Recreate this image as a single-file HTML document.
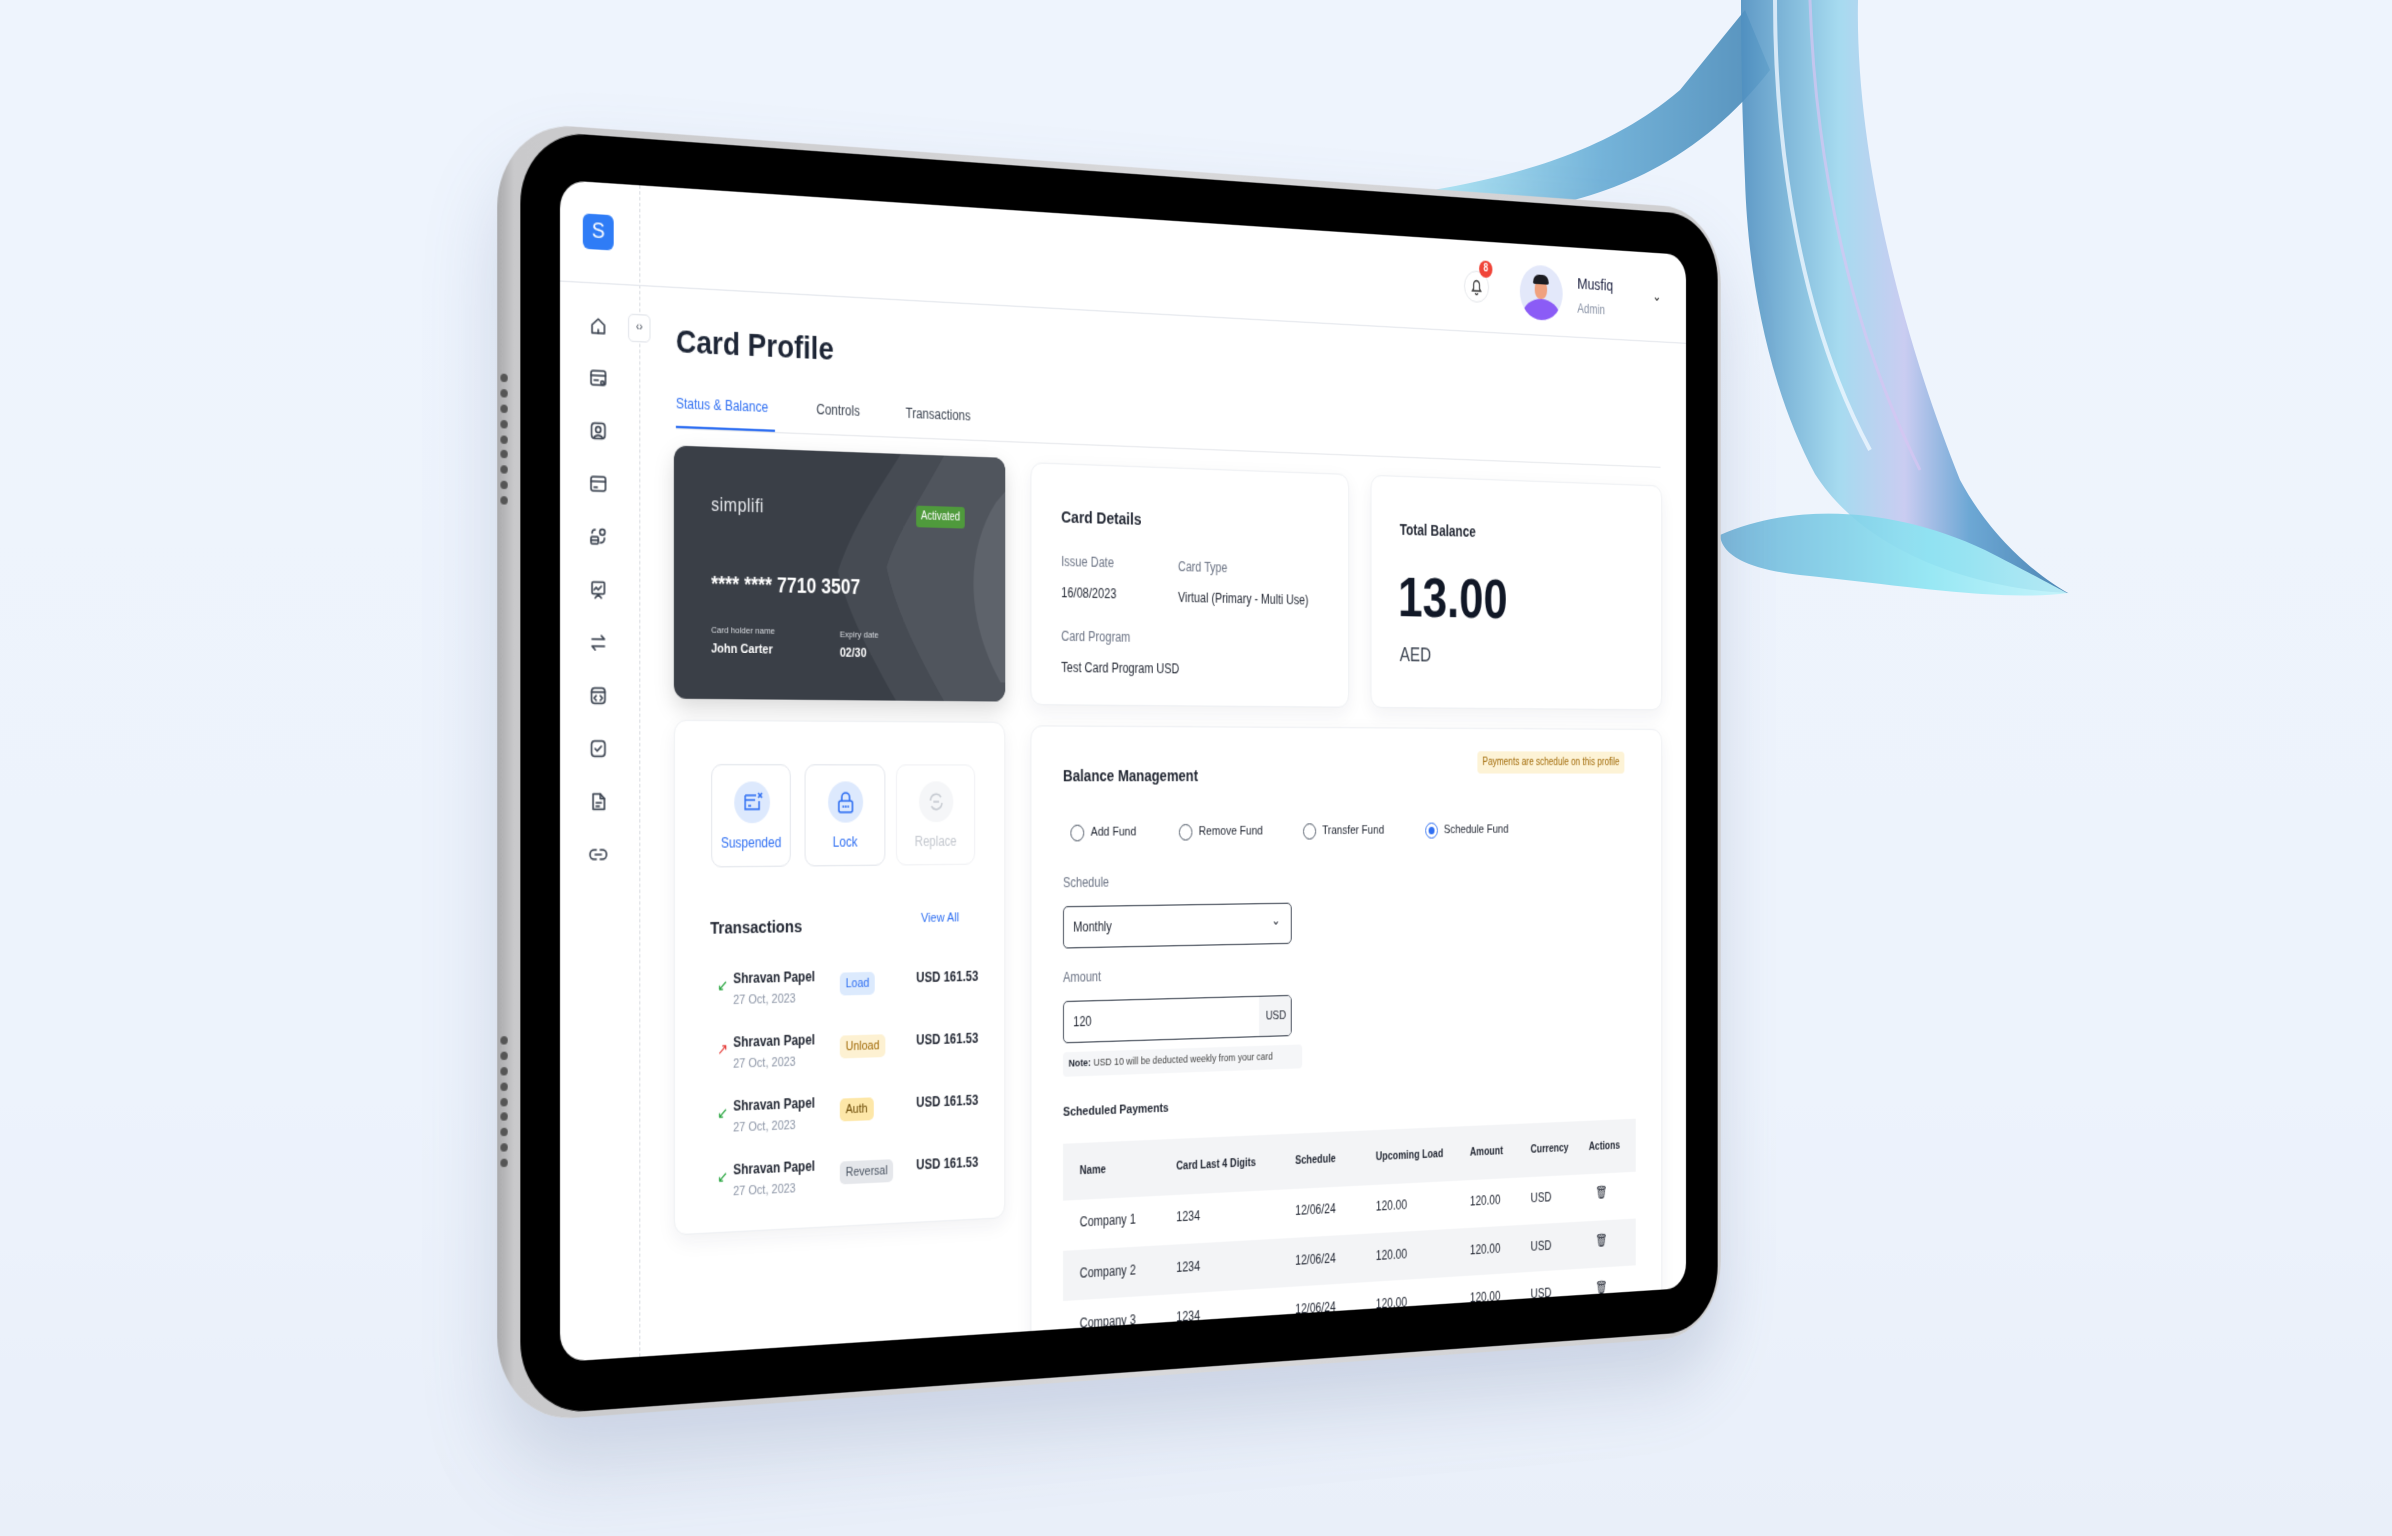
<!DOCTYPE html>
<html><head><meta charset="utf-8">
<style>
*{box-sizing:border-box;margin:0;padding:0}
html,body{width:2392px;height:1536px;overflow:hidden}
body{background:linear-gradient(180deg,#eef4fd 0%,#edf3fc 70%,#e9eff9 100%);font-family:"Liberation Sans",sans-serif;position:relative;color:#1f2430}
#rib{position:absolute;left:0;top:0}
#dev{position:absolute;left:0;top:0;width:1240px;height:1000px;transform-origin:0 0;transform:matrix3d(1.104185,0.090145,0,0.00011632,0,1.182,0,0,0,0,1,0,560,180,0,1)}
.outer{position:absolute;left:-60px;top:-46px;width:1344px;height:1094px;border-radius:72px;background:linear-gradient(90deg,#a9a9ab 0%,#c9c9cb 1.2%,#d8d8da 50%,#cfcfd1 100%);box-shadow:0 40px 70px rgba(90,110,150,.22)}
.black{position:absolute;left:-38px;top:-40px;width:1318px;height:1083px;border-radius:62px;background:#000}
.grill{position:absolute;left:-57px;width:8px;display:flex;flex-direction:column;justify-content:space-between}
.grill i{display:block;width:7px;height:7px;border-radius:50%;background:#555}
.scr{position:absolute;left:0;top:0;width:1240px;height:1000px;border-radius:24px;background:#fff;overflow:hidden}
.a{position:absolute}
.hline{position:absolute;left:0;top:85px;width:1240px;height:1px;background:#e3e6ec}
.dash{position:absolute;left:77px;top:0;height:1000px;border-left:1px dashed #d8dbe0}
.logo{position:absolute;left:22px;top:27px;width:30px;height:30px;border-radius:6px;background:#2f7cf6;color:#fff;font-size:19px;text-align:center;line-height:30px}
.sic{position:absolute;left:28px;width:18px;height:18px}
.sic svg{width:18px;height:18px;fill:none;stroke:#3b4350;stroke-width:1.6;stroke-linecap:round;stroke-linejoin:round}
.box{position:absolute;background:#fff;border:1px solid #eef0f3;border-radius:12px;box-shadow:0 6px 18px rgba(30,40,70,.06)}
.t{position:absolute;white-space:nowrap}
.lbl{font-size:12px;color:#6b7384}
.val{font-size:12px;color:#1f2430}
.h{font-weight:bold;color:#1f2430}
.radio{position:absolute;width:15px;height:15px;border:1.6px solid #4b5563;border-radius:50%}
.badge{position:absolute;font-size:11px;padding:4px 6px;border-radius:5px}
.row{position:absolute;left:0;width:664px;height:45px}
.td{position:absolute;font-size:12px;white-space:nowrap}
</style></head><body>

<svg id="rib" width="2392" height="1536" viewBox="0 0 2392 1536">
<defs>
<linearGradient id="g1" x1="0" y1="0" x2="1" y2="0">
<stop offset="0" stop-color="#4f8fc0"/><stop offset=".3" stop-color="#9ed8ee"/><stop offset=".5" stop-color="#c6c8f0"/><stop offset=".7" stop-color="#5e9fd0"/><stop offset="1" stop-color="#3a78aa"/></linearGradient>
<linearGradient id="g2" x1="0" y1="0" x2="1" y2="0">
<stop offset="0" stop-color="#a8e6f5"/><stop offset=".5" stop-color="#5fa8d3"/><stop offset="1" stop-color="#3b7fb0"/></linearGradient>
<linearGradient id="g3" x1="0" y1="0" x2="1" y2="0">
<stop offset="0" stop-color="#6fb2d8"/><stop offset=".6" stop-color="#8ee6f3"/><stop offset="1" stop-color="#c2f4fb"/></linearGradient>
</defs>
<path d="M1433,190 C1520,175 1610,150 1680,90 L1745,10 L1770,70 C1700,160 1610,200 1510,212 C1465,216 1436,206 1433,190Z" fill="url(#g2)" opacity=".85"/>
<path d="M1741,0 L1858,0 C1855,150 1900,330 1960,480 C1995,545 2045,580 2068,593 C1990,590 1870,560 1815,474 C1770,390 1748,280 1745,180 C1742,110 1741,50 1741,0Z" fill="url(#g1)" opacity=".9"/>
<path d="M1775,0 C1775,150 1800,320 1870,450" stroke="#eef6ff" stroke-width="4" fill="none" opacity=".8"/>
<path d="M1810,0 C1815,160 1850,330 1920,470" stroke="#d7c4f2" stroke-width="3" fill="none" opacity=".7"/>
<path d="M1720,535 C1800,500 1900,510 1985,550 C2040,578 2075,598 2068,593 C2000,602 1900,585 1800,575 C1755,570 1722,558 1720,535Z" fill="url(#g3)" opacity=".9"/>
</svg>

<div id="dev">
 <div class="outer"></div>
 <div class="black"></div>
 <div class="grill" style="top:166px;height:110px"><i></i><i></i><i></i><i></i><i></i><i></i><i></i><i></i><i></i></div>
 <div class="grill" style="top:723px;height:110px"><i></i><i></i><i></i><i></i><i></i><i></i><i></i><i></i><i></i></div>
 <div class="scr">
  <div class="dash"></div>
  <div class="hline"></div>
  <div class="logo">S</div>

  <div class="sic" style="top:113px"><svg viewBox="0 0 18 18"><path d="M3 8L9 3l6 5v7H3z"/><path d="M9 12v3"/></svg></div>
  <div class="sic" style="top:157px"><svg viewBox="0 0 18 18"><rect x="2" y="3" width="14" height="12" rx="2"/><path d="M2 7h14M5 11h4"/><circle cx="13" cy="13" r="1.5"/></svg></div>
  <div class="sic" style="top:202px"><svg viewBox="0 0 18 18"><rect x="2.5" y="2.5" width="13" height="13" rx="3"/><circle cx="9" cy="8" r="2.5"/><path d="M5 15c1-3 7-3 8 0"/></svg></div>
  <div class="sic" style="top:247px"><svg viewBox="0 0 18 18"><rect x="2" y="3" width="14" height="12" rx="2"/><path d="M2 7h14M5 12h3"/></svg></div>
  <div class="sic" style="top:292px"><svg viewBox="0 0 18 18"><circle cx="13" cy="5" r="2.5"/><rect x="2" y="9" width="7" height="6" rx="1"/><path d="M2 12h7M3 6c0-2 1-3 3-3M11 14c2 0 4-1 4-4"/></svg></div>
  <div class="sic" style="top:337px"><svg viewBox="0 0 18 18"><rect x="3" y="2.5" width="12" height="10" rx="1"/><path d="M5 9l2-2 2 2 3-3M6 16l3-3 3 3"/></svg></div>
  <div class="sic" style="top:382px"><svg viewBox="0 0 18 18"><path d="M3 6h12l-3-3M15 12H3l3 3"/></svg></div>
  <div class="sic" style="top:427px"><svg viewBox="0 0 18 18"><rect x="2.5" y="2.5" width="13" height="13" rx="3"/><path d="M2.5 6h13M7 9l-2 2 2 2M11 9l2 2-2 2"/></svg></div>
  <div class="sic" style="top:472px"><svg viewBox="0 0 18 18"><rect x="2.5" y="2.5" width="13" height="13" rx="3"/><path d="M6 9l2 2 4-4"/></svg></div>
  <div class="sic" style="top:517px"><svg viewBox="0 0 18 18"><path d="M4 2.5h7l4 4v9H4z"/><path d="M11 2.5v4h4M7 10h5M7 13h3"/></svg></div>
  <div class="sic" style="top:562px"><svg viewBox="0 0 18 18"><path d="M7 5H5a4 4 0 000 8h2M11 5h2a4 4 0 010 8h-2M6 9h6"/></svg></div>

  <div class="a" style="left:66px;top:110px;width:22px;height:24px;border:1px solid #e1e4ea;border-radius:5px;background:#fff;font-size:10px;text-align:center;line-height:22px;color:#3b4350">&#8249;&#8250;</div>

  <div class="a" style="left:968px;top:28px;width:30px;height:30px;border:1px solid #e4e6ea;border-radius:50%"><svg viewBox="0 0 30 30" width="30" height="30" style="position:absolute;left:-1px;top:-1px"><path d="M10 19h10l-1.5-2v-4a3.5 3.5 0 00-7 0v4z M13.5 21a1.5 1.5 0 003 0" fill="none" stroke="#333" stroke-width="1.3"/></svg></div>
  <div class="a" style="left:986px;top:18px;width:16px;height:16px;border-radius:50%;background:#f04438;color:#fff;font-size:10px;text-align:center;line-height:16px;font-weight:bold">8</div>
  <div class="a" style="left:1035px;top:19px;width:52px;height:52px;border-radius:50%;background:#e3e8fa;overflow:hidden">
   <div class="a" style="left:4px;top:32px;width:44px;height:30px;border-radius:50%;background:#8b5cf6"></div>
   <div class="a" style="left:18px;top:14px;width:15px;height:18px;border-radius:45%;background:#f0a17f"></div>
   <div class="a" style="left:16px;top:9px;width:19px;height:9px;border-radius:8px 8px 2px 2px;background:#1c1c22"></div>
  </div>
  <div class="t" style="left:1105px;top:26px;font-size:15px;color:#1d2140">Musfiq</div>
  <div class="t" style="left:1105px;top:51px;font-size:12px;color:#8a93a6">Admin</div>
  <div class="t" style="left:1198px;top:34px;font-size:13px;color:#222">&#8964;</div>

  <div class="t" style="left:113px;top:116px;font-size:28px;font-weight:bold;color:#1d2535">Card Profile</div>
  <div class="t" style="left:113px;top:178px;font-size:12px;color:#2f6ff2">Status &amp; Balance</div>
  <div class="t" style="left:254px;top:178px;font-size:12px;color:#3b4350">Controls</div>
  <div class="t" style="left:346px;top:178px;font-size:12px;color:#3b4350">Transactions</div>
  <div class="a" style="left:113px;top:206px;width:1095px;height:1px;background:#e6e8ec"></div>
  <div class="a" style="left:113px;top:204px;width:99px;height:2px;background:#2f6ff2"></div>

  <div class="a" style="left:111px;top:221px;width:340px;height:217px;border-radius:12px;background:#3a3f47;overflow:hidden;box-shadow:0 8px 20px rgba(0,0,0,.15)">
   <svg class="a" style="left:0;top:0" width="340" height="217" viewBox="0 0 340 217">
    <path d="M230 0 L275 0 C250 40 225 70 215 100 C225 140 250 180 275 217 L225 217 C200 180 175 140 165 105 C180 65 205 35 230 0Z" fill="#464b53"/>
    <path d="M275 0 L340 0 L340 217 L275 217 C250 180 225 140 215 100 C225 70 250 40 275 0Z" fill="#50555d"/>
    <path d="M330 40 C300 80 295 140 335 200 L340 200 L340 30Z" fill="#5e636b"/>
   </svg>
   <div class="t" style="left:37px;top:42px;font-size:16px;color:#e8eaee;letter-spacing:.5px">simplifi</div>
   <div class="t" style="left:246px;top:45px;padding:4px 5px;border-radius:3px;background:#4f9a3c;color:#fff;font-size:10px">Activated</div>
   <div class="t" style="left:37px;top:108px;font-size:18px;color:#fff;font-weight:bold">**** **** 7710 3507</div>
   <div class="t" style="left:37px;top:153px;font-size:8px;color:#d8dbe0">Card holder name</div>
   <div class="t" style="left:37px;top:168px;font-size:11px;color:#fff;font-weight:bold">John Carter</div>
   <div class="t" style="left:167px;top:155px;font-size:8px;color:#d8dbe0">Expiry date</div>
   <div class="t" style="left:167px;top:170px;font-size:11px;color:#fff;font-weight:bold">02/30</div>
  </div>

  <div class="box" style="left:478px;top:224px;width:355px;height:217px">
   <div class="t h" style="left:32px;top:39px;font-size:15px">Card Details</div>
   <div class="t lbl" style="left:32px;top:80px">Issue Date</div>
   <div class="t val" style="left:32px;top:108px">16/08/2023</div>
   <div class="t lbl" style="left:160px;top:82px">Card Type</div>
   <div class="t val" style="left:160px;top:110px">Virtual (Primary - Multi Use)</div>
   <div class="t lbl" style="left:32px;top:147px">Card Program</div>
   <div class="t val" style="left:32px;top:175px">Test Card Program USD</div>
  </div>

  <div class="box" style="left:858px;top:224px;width:352px;height:217px">
   <div class="t h" style="left:33px;top:41px;font-size:14px">Total Balance</div>
   <div class="t h" style="left:31px;top:83px;font-size:52px;color:#111827">13.00</div>
   <div class="t" style="left:33px;top:156px;font-size:18px;color:#3b4350">AED</div>
  </div>

  <div class="box" style="left:111px;top:456px;width:340px;height:442px">
   <div class="a" style="left:36px;top:37px;width:80px;height:89px;border:1px solid #e3e6ec;border-radius:10px">
    <div class="a" style="left:22px;top:14px;width:36px;height:36px;border-radius:50%;background:#dde9fd"><svg viewBox="0 0 36 36" width="36" height="36"><path d="M11 12h11M11 12v12h14v-7M11 16h10M14 21h3M24 10l4 4M28 10l-4 4" fill="none" stroke="#2f6ff2" stroke-width="1.5"/></svg></div>
    <div class="t" style="left:0;width:78px;text-align:center;top:60px;font-size:12px;color:#2f6ff2">Suspended</div>
   </div>
   <div class="a" style="left:130px;top:37px;width:83px;height:89px;border:1px solid #e3e6ec;border-radius:10px">
    <div class="a" style="left:23px;top:14px;width:36px;height:36px;border-radius:50%;background:#dde9fd"><svg viewBox="0 0 36 36" width="36" height="36"><rect x="11" y="17" width="14" height="10" rx="2" fill="none" stroke="#2f6ff2" stroke-width="1.6"/><path d="M14 17v-3a4 4 0 018 0v3" fill="none" stroke="#2f6ff2" stroke-width="1.6"/><circle cx="15.5" cy="22" r="1" fill="#2f6ff2"/><circle cx="18" cy="22" r="1" fill="#2f6ff2"/><circle cx="20.5" cy="22" r="1" fill="#2f6ff2"/></svg></div>
    <div class="t" style="left:0;width:81px;text-align:center;top:60px;font-size:12px;color:#2f6ff2">Lock</div>
   </div>
   <div class="a" style="left:224px;top:37px;width:83px;height:89px;border:1px solid #f0f1f4;border-radius:10px">
    <div class="a" style="left:23px;top:14px;width:36px;height:36px;border-radius:50%;background:#f5f6f8"><svg viewBox="0 0 36 36" width="36" height="36"><path d="M12 17a6 6 0 0111-3M24 19a6 6 0 01-11 3M15 18h6" fill="none" stroke="#c5c9d0" stroke-width="1.5"/></svg></div>
    <div class="t" style="left:0;width:81px;text-align:center;top:60px;font-size:12px;color:#c3c7ce">Replace</div>
   </div>
   <div class="t h" style="left:35px;top:170px;font-size:15px">Transactions</div>
   <div class="t" style="left:250px;top:167px;font-size:11.5px;color:#2f6ff2">View All</div>

   <div class="t" style="left:42px;top:220px;font-size:13px;color:#22a33a">&#8601;</div>
   <div class="t h" style="left:58px;top:215px;font-size:12px">Shravan Papel</div>
   <div class="t" style="left:58px;top:235px;font-size:11px;color:#8c95a6">27 Oct, 2023</div>
   <div class="badge" style="left:166px;top:219px;background:#dceafd;color:#2f6ff2">Load</div>
   <div class="t h" style="left:245px;top:218px;font-size:12px">USD 161.53</div>

   <div class="t" style="left:42px;top:275px;font-size:13px;color:#e53935">&#8599;</div>
   <div class="t h" style="left:58px;top:270px;font-size:12px">Shravan Papel</div>
   <div class="t" style="left:58px;top:290px;font-size:11px;color:#8c95a6">27 Oct, 2023</div>
   <div class="badge" style="left:166px;top:274px;background:#fdf1d2;color:#a16a07">Unload</div>
   <div class="t h" style="left:245px;top:273px;font-size:12px">USD 161.53</div>

   <div class="t" style="left:42px;top:330px;font-size:13px;color:#22a33a">&#8601;</div>
   <div class="t h" style="left:58px;top:325px;font-size:12px">Shravan Papel</div>
   <div class="t" style="left:58px;top:345px;font-size:11px;color:#8c95a6">27 Oct, 2023</div>
   <div class="badge" style="left:166px;top:329px;background:#fde7a8;color:#6b4a05">Auth</div>
   <div class="t h" style="left:245px;top:328px;font-size:12px">USD 161.53</div>

   <div class="t" style="left:42px;top:385px;font-size:13px;color:#22a33a">&#8601;</div>
   <div class="t h" style="left:58px;top:380px;font-size:12px">Shravan Papel</div>
   <div class="t" style="left:58px;top:400px;font-size:11px;color:#8c95a6">27 Oct, 2023</div>
   <div class="badge" style="left:166px;top:384px;background:#e5e7eb;color:#4b5563">Reversal</div>
   <div class="t h" style="left:245px;top:383px;font-size:12px">USD 161.53</div>
  </div>

  <div class="box" style="left:478px;top:459px;width:732px;height:600px">
   <div class="t h" style="left:34px;top:37px;font-size:14.5px">Balance Management</div>
   <div class="t" style="left:505px;top:21px;padding:5px 6px;background:#fdf3d6;border-radius:4px;font-size:10px;color:#a16a07">Payments are schedule on this profile</div>
   <div class="radio" style="left:42px;top:88px"></div><div class="t" style="left:64px;top:89px;font-size:11.5px">Add Fund</div>
   <div class="radio" style="left:161px;top:88px"></div><div class="t" style="left:183px;top:89px;font-size:11.5px">Remove Fund</div>
   <div class="radio" style="left:301px;top:88px"></div><div class="t" style="left:323px;top:89px;font-size:11.5px">Transfer Fund</div>
   <div class="radio" style="left:443px;top:88px;border-color:#2f6ff2"><div class="a" style="left:2.5px;top:2.5px;width:7px;height:7px;border-radius:50%;background:#2f6ff2"></div></div><div class="t" style="left:465px;top:89px;font-size:11.5px">Schedule Fund</div>
   <div class="t lbl" style="left:34px;top:133px">Schedule</div>
   <div class="a" style="left:34px;top:161px;width:254px;height:38px;border:1.3px solid #3b4350;border-radius:5px">
    <div class="t" style="left:10px;top:11px;font-size:12px">Monthly</div>
    <div class="t" style="left:230px;top:8px;font-size:12px">&#8964;</div>
   </div>
   <div class="t lbl" style="left:34px;top:218px">Amount</div>
   <div class="a" style="left:34px;top:246px;width:254px;height:38px;border:1.3px solid #3b4350;border-radius:5px;overflow:hidden">
    <div class="t" style="left:10px;top:11px;font-size:12px">120</div>
    <div class="a" style="left:216px;top:0;width:38px;height:38px;background:#f3f4f6;font-size:11px;text-align:center;line-height:36px">USD</div>
   </div>
   <div class="a" style="left:34px;top:292px;width:266px;height:22px;background:#f5f6f8;border-radius:4px;font-size:9.5px;line-height:22px;padding-left:6px;white-space:nowrap"><b>Note:</b> <span style="color:#444">USD 10 will be deducted weekly from your card</span></div>
   <div class="t h" style="left:34px;top:340px;font-size:11.5px">Scheduled Payments</div>
   <div class="a" style="left:34px;top:374px;width:664px;height:400px">
    <div class="row" style="top:0;height:51px;background:#f3f4f6"></div>
    <div class="row" style="top:96px;background:#f3f4f6"></div>
    <div class="td h" style="left:18px;top:19px;font-size:10.5px">Name</div>
    <div class="td h" style="left:124px;top:19px;font-size:10.5px">Card Last 4 Digits</div>
    <div class="td h" style="left:258px;top:19px;font-size:10.5px">Schedule</div>
    <div class="td h" style="left:351px;top:19px;font-size:10.5px">Upcoming Load</div>
    <div class="td h" style="left:462px;top:19px;font-size:10.5px">Amount</div>
    <div class="td h" style="left:535px;top:19px;font-size:10.5px">Currency</div>
    <div class="td h" style="left:606px;top:19px;font-size:10.5px">Actions</div>
    <div class="td" style="left:18px;top:64px">Company 1</div><div class="td" style="left:124px;top:64px">1234</div><div class="td" style="left:258px;top:64px">12/06/24</div><div class="td" style="left:351px;top:64px">120.00</div><div class="td" style="left:462px;top:64px">120.00</div><div class="td" style="left:535px;top:64px">USD</div><div class="td" style="left:614px;top:62px">&#128465;</div>
    <div class="td" style="left:18px;top:110px">Company 2</div><div class="td" style="left:124px;top:110px">1234</div><div class="td" style="left:258px;top:110px">12/06/24</div><div class="td" style="left:351px;top:110px">120.00</div><div class="td" style="left:462px;top:110px">120.00</div><div class="td" style="left:535px;top:110px">USD</div><div class="td" style="left:614px;top:108px">&#128465;</div>
    <div class="td" style="left:18px;top:155px">Company 3</div><div class="td" style="left:124px;top:155px">1234</div><div class="td" style="left:258px;top:155px">12/06/24</div><div class="td" style="left:351px;top:155px">120.00</div><div class="td" style="left:462px;top:155px">120.00</div><div class="td" style="left:535px;top:155px">USD</div><div class="td" style="left:614px;top:153px">&#128465;</div>
   </div>
  </div>
 </div>
</div>
</body></html>
